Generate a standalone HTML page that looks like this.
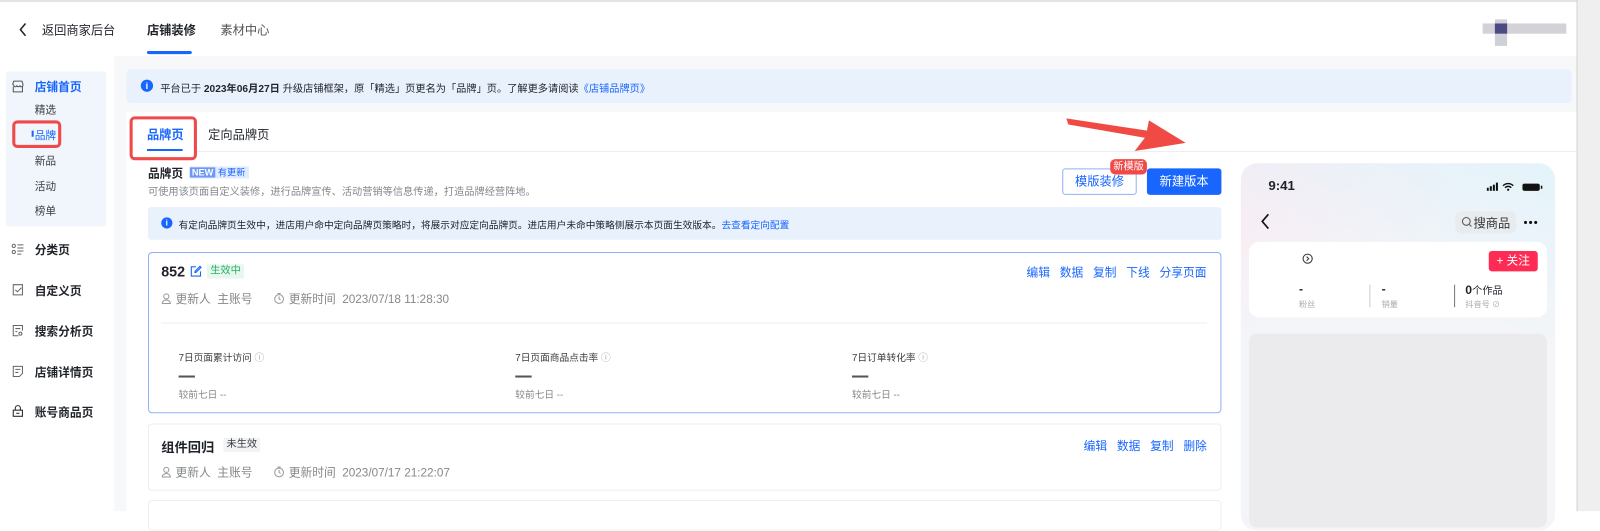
<!DOCTYPE html>
<html><head><meta charset="utf-8"><style>
*{margin:0;padding:0;box-sizing:border-box}
html,body{width:1600px;height:511px;overflow:hidden;background:#fff}
body{font-family:"Liberation Sans","Noto Sans CJK SC",sans-serif;color:#1f2329}
#w{position:absolute;left:0;top:0;width:1568px;height:501px;transform:scale(1.0204);transform-origin:0 0}
.a{position:absolute;white-space:nowrap}
.blue{color:#1966ff}
.card{position:absolute;background:#fff;border:1px solid #eceef1;border-radius:4px}
</style></head><body><div id="w">
<div class="a" style="left:0;top:0;width:1545px;height:2px;background:#e3e4e6"></div>
<div class="a" style="left:1545px;top:0;width:1px;height:501px;background:#cfd0d2"></div>
<div class="a" style="left:1546px;top:0;width:22px;height:501px;background:#efefef"></div>
<!-- header -->
<svg class="a" style="left:18px;top:22px" width="10" height="14" viewBox="0 0 10 14"><path d="M7 1L2 7l5 6" fill="none" stroke="#1f2329" stroke-width="1.5"/></svg>
<div class="a" style="left:41px;top:21px;font-size:12px">返回商家后台</div>
<div class="a" style="left:144px;top:21px;font-size:12px;font-weight:bold">店铺装修</div>
<div class="a" style="left:144px;top:50px;width:44px;height:3px;background:#1966ff;border-radius:2px"></div>
<div class="a" style="left:216px;top:21px;font-size:12px;color:#505255">素材中心</div>
<div class="a" style="left:1453px;top:23px;width:82px;height:10px;background:#d2d2d8"></div>
<div class="a" style="left:1465px;top:19px;width:12px;height:26px;background:#d0d0d8"></div>
<div class="a" style="left:1465px;top:23px;width:12px;height:10px;background:#4c4a82"></div>
<!-- gray bg -->
<div class="a" style="left:112px;top:55px;width:1433px;height:446px;background:#f7f8fa"></div>
<!-- sidebar -->
<div class="a" style="left:6px;top:70px;width:98px;height:152px;background:#f1f5fc;border-radius:3px"></div>
<svg class="a" style="left:11px;top:78px" width="13" height="13" viewBox="0 0 13 13"><path d="M1.5 4.5L2.5 1.5h8l1 3v1a1.5 1.5 0 0 1-3 0 1.5 1.5 0 0 1-3 0 1.5 1.5 0 0 1-3 0zM2 7v5h9V7" fill="none" stroke="#555" stroke-width="1"/></svg>
<div class="a" style="left:34px;top:77px;font-size:11.5px;font-weight:bold;color:#1966ff">店铺首页</div>
<div class="a" style="left:34px;top:100px;font-size:10.5px;color:#3a3c40">精选</div>
<div class="a" style="left:31px;top:128px;width:2px;height:6px;background:#1966ff"></div>
<div class="a" style="left:34px;top:125px;font-size:10.5px;color:#1966ff">品牌</div>
<div class="a" style="left:12px;top:118px;width:48px;height:27px;border:3px solid #f0494a;border-radius:5px"></div>
<div class="a" style="left:34px;top:150px;font-size:10.5px;color:#3a3c40">新品</div>
<div class="a" style="left:34px;top:175px;font-size:10.5px;color:#3a3c40">活动</div>
<div class="a" style="left:34px;top:199px;font-size:10.5px;color:#3a3c40">榜单</div>
<svg class="a" style="left:11px;top:238px" width="13" height="12" viewBox="0 0 13 12"><circle cx="2.5" cy="3" r="1.6" fill="none" stroke="#666"/><circle cx="2.5" cy="9" r="1.6" fill="none" stroke="#666"/><path d="M6 2h6M6 5h6M6 8h6M6 11h4" stroke="#666"/></svg>
<div class="a" style="left:34px;top:237px;font-size:11.5px;font-weight:bold">分类页</div>
<svg class="a" style="left:12px;top:278px" width="11" height="12" viewBox="0 0 11 12"><path d="M1 1h9v10H1zM3 6l2 2 4-4" fill="none" stroke="#666"/></svg>
<div class="a" style="left:34px;top:277px;font-size:11.5px;font-weight:bold">自定义页</div>
<svg class="a" style="left:12px;top:318px" width="11" height="12" viewBox="0 0 11 12"><path d="M10 6V1H1v10h5M3 4h5M3 7h2" fill="none" stroke="#666"/><circle cx="8" cy="9" r="1.5" fill="none" stroke="#666"/></svg>
<div class="a" style="left:34px;top:317px;font-size:11.5px;font-weight:bold">搜索分析页</div>
<svg class="a" style="left:12px;top:358px" width="11" height="12" viewBox="0 0 11 12"><path d="M1 1h9v7l-3 3H1zM3 4h5M3 7h3" fill="none" stroke="#666"/></svg>
<div class="a" style="left:34px;top:357px;font-size:11.5px;font-weight:bold">店铺详情页</div>
<svg class="a" style="left:12px;top:397px" width="11" height="12" viewBox="0 0 11 12"><path d="M3 5V3a2.5 2.5 0 0 1 5 0v2M1 5h9v6H1zM4 8h3" fill="none" stroke="#333" stroke-width="1.1"/></svg>
<div class="a" style="left:34px;top:396px;font-size:11.5px;font-weight:bold">账号商品页</div>
<!-- notice -->
<div class="a" style="left:124px;top:68px;width:1416px;height:33px;background:#e9f1fd;border-radius:4px"></div>
<div class="a" style="left:138px;top:78px;width:12px;height:12px;border-radius:50%;background:#1966ff;color:#fff;font-size:9px;text-align:center;line-height:12px;font-weight:bold">i</div>
<div class="a" style="left:157px;top:78px;font-size:10px">平台已于 <b>2023年06月27日</b> 升级店铺框架，原「精选」页更名为「品牌」页。了解更多请阅读<span class="blue">《店铺品牌页》</span></div>
<!-- panel -->
<div class="a" style="left:124px;top:110px;width:1421px;height:391px;background:#fff"></div>
<div class="a" style="left:190px;top:148px;width:1355px;height:1px;background:#eceef1"></div>
<div class="a" style="left:144px;top:123px;font-size:12px;color:#1966ff;font-weight:bold">品牌页</div>
<div class="a" style="left:144px;top:146px;width:35px;height:2px;background:#1966ff"></div>
<div class="a" style="left:204px;top:123px;font-size:12px">定向品牌页</div>
<div class="a" style="left:127px;top:114px;width:66px;height:43px;border:3px solid #f0494a;border-radius:5px"></div>
<!-- arrow -->
<svg class="a" style="left:1040px;top:110px" width="130" height="48" viewBox="0 0 130 48"><polygon points="5,6 7,12 82,25 72,38 122,30 86,8 84,18" fill="#f04a45"/></svg>
<!-- title -->
<div class="a" style="left:145px;top:162px;font-size:11.5px;font-weight:bold">品牌页</div>
<div class="a" style="left:186px;top:163px;height:12px;font-size:9px;line-height:12px;background:#e3ecfd;color:#1966ff;padding-right:3px"><span style="background:#6d98f8;color:#fff;padding:0 2px;font-weight:bold">NEW</span> 有更新</div>
<div class="a" style="left:145px;top:179px;font-size:10px;color:#85878a">可使用该页面自定义装修，进行品牌宣传、活动营销等信息传递，打造品牌经营阵地。</div>
<div class="a" style="left:1041px;top:165px;width:73px;height:26px;border:1px solid #8fb0f8;border-radius:3px;color:#1966ff;font-size:12px;text-align:center;line-height:24px">模版装修</div>
<div class="a" style="left:1124px;top:165px;width:73px;height:26px;background:#1966ff;border-radius:3px;color:#fff;font-size:12px;text-align:center;line-height:26px">新建版本</div>
<div class="a" style="left:1088px;top:156px;height:15px;padding:0 3px;background:#f0494a;border-radius:5px;color:#fff;font-size:10px;line-height:15px">新模版</div>
<!-- info2 -->
<div class="a" style="left:145px;top:203px;width:1052px;height:32px;background:#e9f1fd;border-radius:3px"></div>
<div class="a" style="left:158px;top:213px;width:11px;height:11px;border-radius:50%;background:#1966ff;color:#fff;font-size:8px;text-align:center;line-height:11px;font-weight:bold">i</div>
<div class="a" style="left:175px;top:213px;font-size:9.5px">有定向品牌页生效中，进店用户命中定向品牌页策略时，将展示对应定向品牌页。进店用户未命中策略侧展示本页面生效版本。<span class="blue">去查看定向配置</span></div>
<!-- card1 -->
<div class="card" style="left:145px;top:247px;width:1052px;height:158px;border-color:#8fb0f8"></div>
<div class="a" style="left:158px;top:258px;font-size:14px;font-weight:bold">852</div>
<svg class="a" style="left:186px;top:260px" width="12" height="12" viewBox="0 0 12 12"><path d="M6 1.5H1.5v9h9V6M5 7l1 0 5-5-1-1-5 5z" fill="none" stroke="#1966ff" stroke-width="1.1"/></svg>
<div class="a" style="left:203px;top:259px;height:14px;padding:0 3px;background:#e8f7ee;color:#22b364;font-size:10px;line-height:14px">生效中</div>
<svg class="a" style="left:158px;top:287px" width="10" height="11" viewBox="0 0 10 11"><circle cx="5" cy="3.5" r="2.5" fill="none" stroke="#999"/><path d="M1 10.5a4 3.5 0 0 1 8 0z" fill="none" stroke="#999"/></svg>
<div class="a" style="left:172px;top:285px;font-size:11.5px;color:#85878a">更新人 &nbsp;主账号</div>
<svg class="a" style="left:268px;top:287px" width="11" height="11" viewBox="0 0 11 11"><circle cx="5.5" cy="6" r="4.3" fill="none" stroke="#999"/><path d="M5.5 3.5V6l1.5 1M4 .7h3" fill="none" stroke="#999"/></svg>
<div class="a" style="left:283px;top:285px;font-size:11.5px;color:#85878a">更新时间 &nbsp;2023/07/18 11:28:30</div>
<div class="a" style="left:158px;top:316px;width:1025px;height:1px;background:#eceef1"></div>
<div class="a" style="left:175px;top:343px;font-size:9.5px;color:#3a3c40">7日页面累计访问 <span style="color:#aaa">ⓘ</span></div>
<div class="a" style="left:175px;top:368px;width:16px;height:2px;background:#555;box-shadow:0 0 0 0"></div>
<div class="a" style="left:175px;top:379px;font-size:9.5px;color:#85878a">较前七日 --</div>
<div class="a" style="left:505px;top:343px;font-size:9.5px;color:#3a3c40">7日页面商品点击率 <span style="color:#aaa">ⓘ</span></div>
<div class="a" style="left:505px;top:368px;width:16px;height:2px;background:#555"></div>
<div class="a" style="left:505px;top:379px;font-size:9.5px;color:#85878a">较前七日 --</div>
<div class="a" style="left:835px;top:343px;font-size:9.5px;color:#3a3c40">7日订单转化率 <span style="color:#aaa">ⓘ</span></div>
<div class="a" style="left:835px;top:368px;width:16px;height:2px;background:#555"></div>
<div class="a" style="left:835px;top:379px;font-size:9.5px;color:#85878a">较前七日 --</div>
<div class="a" style="left:1006px;top:259px;font-size:11.5px;color:#1966ff">编辑&nbsp;&nbsp;&nbsp;数据&nbsp;&nbsp;&nbsp;复制&nbsp;&nbsp;&nbsp;下线&nbsp;&nbsp;&nbsp;分享页面</div>
<!-- card2 -->
<div class="card" style="left:145px;top:415px;width:1052px;height:66px"></div>
<div class="a" style="left:158px;top:428px;font-size:13px;font-weight:bold">组件回归</div>
<div class="a" style="left:219px;top:429px;height:14px;padding:0 3px;background:#f2f3f5;color:#3a3c40;font-size:10px;line-height:14px">未生效</div>
<svg class="a" style="left:158px;top:457px" width="10" height="11" viewBox="0 0 10 11"><circle cx="5" cy="3.5" r="2.5" fill="none" stroke="#999"/><path d="M1 10.5a4 3.5 0 0 1 8 0z" fill="none" stroke="#999"/></svg>
<div class="a" style="left:172px;top:455px;font-size:11.5px;color:#85878a">更新人 &nbsp;主账号</div>
<svg class="a" style="left:268px;top:457px" width="11" height="11" viewBox="0 0 11 11"><circle cx="5.5" cy="6" r="4.3" fill="none" stroke="#999"/><path d="M5.5 3.5V6l1.5 1M4 .7h3" fill="none" stroke="#999"/></svg>
<div class="a" style="left:283px;top:455px;font-size:11.5px;color:#85878a">更新时间 &nbsp;2023/07/17 21:22:07</div>
<div class="a" style="left:1062px;top:429px;font-size:11.5px;color:#1966ff">编辑&nbsp;&nbsp;&nbsp;数据&nbsp;&nbsp;&nbsp;复制&nbsp;&nbsp;&nbsp;删除</div>
<div class="card" style="left:145px;top:490px;width:1052px;height:30px"></div>
<!-- phone -->
<div class="a" style="left:1216px;top:160px;width:308px;height:360px;border-radius:16px;background:linear-gradient(160deg,#fbe9f1 0%,#f4f5f8 35%,#f4f5f8 60%);overflow:hidden">
 <div style="position:absolute;inset:0;background:linear-gradient(200deg,#e3f4fb 0%,rgba(244,245,248,0) 40%)"></div>
</div>
<div class="a" style="left:1243px;top:174px;font-size:13px;font-weight:bold">9:41</div>
<svg class="a" style="left:1457px;top:178px" width="56" height="10" viewBox="0 0 56 10"><rect x="0" y="6" width="2" height="3" fill="#111"/><rect x="3" y="4.5" width="2" height="4.5" fill="#111"/><rect x="6" y="3" width="2" height="6" fill="#111"/><rect x="9" y="1" width="2" height="8" fill="#111"/><path d="M16 4a7 7 0 0 1 10 0M18 6a4 4 0 0 1 6 0" fill="none" stroke="#111" stroke-width="1.4"/><circle cx="21" cy="8" r="1.1" fill="#111"/><rect x="35" y="2" width="17" height="7" rx="2" fill="#111"/><rect x="53" y="4" width="1.5" height="3" fill="#111"/></svg>
<svg class="a" style="left:1235px;top:209px" width="10" height="16" viewBox="0 0 10 16"><path d="M8 1L2 8l6 7" fill="none" stroke="#111" stroke-width="1.6"/></svg>
<div class="a" style="left:1426px;top:207px;width:60px;height:22px;background:#e9ecef;border-radius:6px"></div>
<svg class="a" style="left:1432px;top:212px" width="11" height="11" viewBox="0 0 11 11"><circle cx="5" cy="5" r="3.8" fill="none" stroke="#555"/><path d="M8 8l2 2" stroke="#555"/></svg>
<div class="a" style="left:1444px;top:210px;font-size:12px;color:#333">搜商品</div>
<svg class="a" style="left:1493px;top:216px" width="14" height="4" viewBox="0 0 14 4"><circle cx="2" cy="2" r="1.5" fill="#111"/><circle cx="7" cy="2" r="1.5" fill="#111"/><circle cx="12" cy="2" r="1.5" fill="#111"/></svg>
<div class="a" style="left:1224px;top:237px;width:292px;height:74px;background:#fff;border-radius:10px"></div>
<svg class="a" style="left:1276px;top:248px" width="11" height="11" viewBox="0 0 11 11"><circle cx="5.5" cy="5.5" r="4.5" fill="none" stroke="#333"/><path d="M4.5 3.5l2 2-2 2" fill="none" stroke="#333"/></svg>
<div class="a" style="left:1459px;top:246px;width:48px;height:20px;background:#fe2c55;border-radius:3px;color:#fff;font-size:11.5px;text-align:center;line-height:20px">+ 关注</div>
<div class="a" style="left:1273px;top:276px;font-size:12px;font-weight:bold">-</div>
<div class="a" style="left:1273px;top:293px;font-size:8px;color:#aaa">粉丝</div>
<div class="a" style="left:1342px;top:279px;width:1px;height:22px;background:#ccc"></div>
<div class="a" style="left:1354px;top:276px;font-size:12px;font-weight:bold">-</div>
<div class="a" style="left:1354px;top:293px;font-size:8px;color:#aaa">销量</div>
<div class="a" style="left:1425px;top:279px;width:1px;height:22px;background:#777"></div>
<div class="a" style="left:1436px;top:276px;font-size:10px"><b style="font-size:12px">0</b>个作品</div>
<div class="a" style="left:1436px;top:293px;font-size:8px;color:#aaa">抖音号 ⊘</div>
<div class="a" style="left:1224px;top:327px;width:292px;height:190px;background:#ebebee;border-radius:8px"></div>
</div></body></html>
